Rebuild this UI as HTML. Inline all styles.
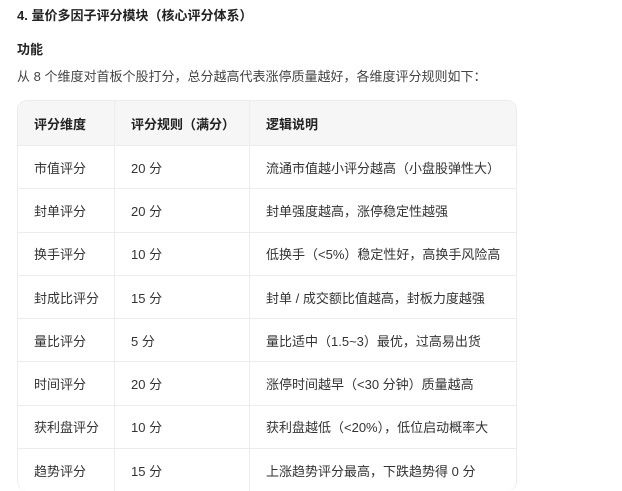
<!DOCTYPE html><html><head><meta charset="utf-8"><style>
body{margin:0;background:#fff;font-family:"Liberation Sans","Noto Sans CJK SC",sans-serif;color:#222;font-size:13px;width:622px;height:491px;overflow:hidden;position:relative}
.t{position:absolute;left:17px;white-space:nowrap}
table{position:absolute;left:17px;top:100px;width:500px;border-collapse:separate;border-spacing:0;border:1px solid #ececec;border-bottom:none;border-radius:10px;overflow:hidden}
td,th{height:42.3px;padding:0 0 0 16px;text-align:left;border-top:1px solid #ececec;font-size:13px;color:#333}
th{background:#f6f6f6;font-weight:bold;height:44px;border-top:none;color:#222}
td+td,th+th{border-left:1px solid #ececec}
</style></head><body>
<div class="t" style="top:5px;font-weight:bold">4. 量价多因子评分模块（核心评分体系）</div>
<div class="t" style="top:39px;font-weight:bold">功能</div>
<div class="t" style="top:66px;color:#444">从 8 个维度对首板个股打分，总分越高代表涨停质量越好，各维度评分规则如下：</div>
<table>
<tr><th style="width:80px">评分维度</th><th style="width:118px">评分规则（满分）</th><th>逻辑说明</th></tr>
<tr><td>市值评分</td><td>20 分</td><td>流通市值越小评分越高（小盘股弹性大）</td></tr>
<tr><td>封单评分</td><td>20 分</td><td>封单强度越高，涨停稳定性越强</td></tr>
<tr><td>换手评分</td><td>10 分</td><td>低换手（&lt;5%）稳定性好，高换手风险高</td></tr>
<tr><td>封成比评分</td><td>15 分</td><td>封单 / 成交额比值越高，封板力度越强</td></tr>
<tr><td>量比评分</td><td>5 分</td><td>量比适中（1.5~3）最优，过高易出货</td></tr>
<tr><td>时间评分</td><td>20 分</td><td>涨停时间越早（&lt;30 分钟）质量越高</td></tr>
<tr><td>获利盘评分</td><td>10 分</td><td>获利盘越低（&lt;20%），低位启动概率大</td></tr>
<tr><td>趋势评分</td><td>15 分</td><td>上涨趋势评分最高，下跌趋势得 0 分</td></tr>
</table>
</body></html>
